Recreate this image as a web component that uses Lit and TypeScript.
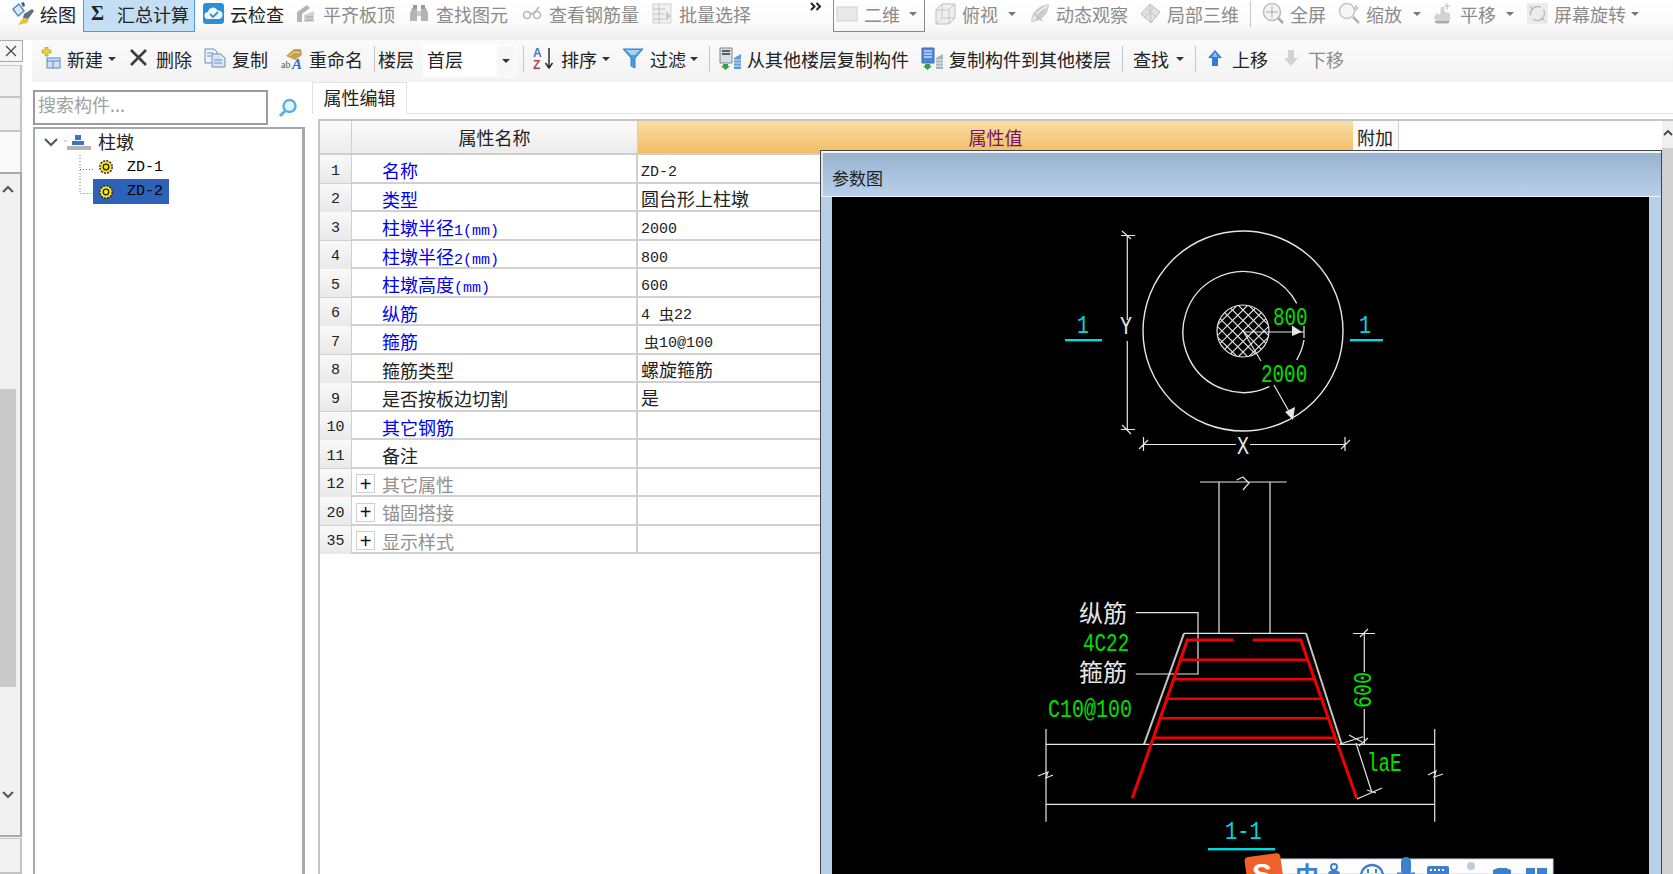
import { LitElement, css, html, svg } from 'lit';
import { customElement } from 'lit/decorators.js';

const G = '#b4b4b4';

const icons: Record<string, unknown> = {
  draw: svg`<path d="M0 7l7-6 6 8-7 6z" fill="#4f86c6"/><path d="M2 7l5-4 4 6-5 4z" fill="#dbe9f7"/><path d="M9 1l3-1 1 4-2 1z" fill="#2f5f9c"/><path d="M12 12l8-5 2 2-6 8-5-1z" fill="#5f6f80"/><path d="M11 16l-5 7 9-2 2-4z" fill="#e4c23c"/>`,
  cloud: svg`<rect x="1" y="1" width="21" height="21" rx="3" fill="#2e8fd8"/><path d="M6 17a3.5 3.5 0 0 1 0-7 5 5 0 0 1 9.500-1.500A4.300 4.300 0 0 1 17 17z" fill="#f2f8fd"/><path d="M8 12l3 3 5-5" stroke="#2e8fd8" stroke-width="1.800" fill="none"/>`,
  align: svg`<path d="M2 20V10l10-7 3 3-8 6v8z" fill="${G}"/><path d="M9 20v-7l10-4v11z" fill="#d4d4d4"/><path d="M11 18h7M11 15h7" stroke="#9a9a9a"/>`,
  binoc: svg`<path d="M4 6h5v13H2V11zM13 6h5l2 5v8h-7z" fill="${G}"/><rect x="5" y="3" width="4" height="4" fill="#999"/><rect x="13" y="3" width="4" height="4" fill="#999"/><rect x="9" y="9" width="4" height="5" fill="#ccc"/>`,
  glasses: svg`<circle cx="6" cy="13" r="3.500" fill="none" stroke="${G}" stroke-width="1.500"/><circle cx="16" cy="13" r="3.500" fill="none" stroke="${G}" stroke-width="1.500"/><path d="M9 12l4-1M13 11l5-6" stroke="${G}" stroke-width="1.500"/>`,
  batch: svg`<path d="M2 2h18v19H2z" fill="#f1f1f1" stroke="#d0d0d0"/><path d="M2 7h12M2 12h12M2 17h12M8 2v19" stroke="#c0c0c0"/><path d="M15 9l5 5-5 5z" fill="#c8c8c8"/>`,
  flat: svg`<rect x="1" y="5" width="20" height="14" fill="#e9e9e9" stroke="#cfcfcf"/>`,
  cube: svg`<path d="M2 8l6-6h13v14l-6 6H2z" fill="#efefef" stroke="#bdbdbd"/><path d="M2 8h13v14M15 8l6-6M2 22l6-6h13M8 2v14" stroke="#c6c6c6" fill="none"/>`,
  orbit: svg`<path d="M3 20C3 11 10 3 21 2c0 9-7 18-18 18z" fill="#cfcfcf"/><path d="M5 18C9 12 13 8 19 4" stroke="#f2f2f2" stroke-width="2"/><path d="M7 12l7 7" stroke="#aaa"/>`,
  part: svg`<path d="M11 2l10 8-9 11L2 12z" fill="#e2e2e2" stroke="#bcbcbc"/><path d="M7 6l10 9M15 5L6 16M11 2l1 19" stroke="#c4c4c4"/>`,
  full: svg`<circle cx="10" cy="10" r="8.500" fill="#f4f4f4" stroke="#bbb" stroke-width="1.500"/><path d="M10 4v12M4 10h12" stroke="#aaa"/><path d="M16 16l5 5" stroke="#aaa" stroke-width="2.500"/>`,
  zoom: svg`<circle cx="9" cy="9" r="7.500" fill="#f6f6f6" stroke="#c4c4c4" stroke-width="1.500"/><path d="M15 15l6 6" stroke="#b4b4b4" stroke-width="2.500"/><path d="M18 3v6M15 6h6" stroke="#c4c4c4" stroke-width="1.500"/>`,
  pan: svg`<path d="M2 15l3-4 3 2 1-8h3l1 5 5 1v8l-3 3H5z" fill="#d2d2d2"/><path d="M15 1v7M12 4h6" stroke="#bdbdbd"/><path d="M3 20h14" stroke="#aaa" stroke-width="2"/>`,
  rot: svg`<rect x="1" y="1" width="21" height="21" fill="#ececec"/><circle cx="11.500" cy="11.500" r="7" fill="none" stroke="#bdbdbd" stroke-width="1.500" stroke-dasharray="16 4"/><path d="M4 4l3 4M19 19l-4-3" stroke="#aaa"/>`,
  add: svg`<path d="M3 3h3V0h3v3h3v3H9v3H6V6H3z" fill="#f0d23c" stroke="#a88f1c" stroke-width=".6"/><rect x="8" y="11" width="13" height="10" fill="#cfe0f3" stroke="#5d88bb"/><path d="M8 14h13M14 14v7" stroke="#5d88bb"/>`,
  del: svg`<path d="M3 3l15 15M18 3L3 18" stroke="#3c3c3c" stroke-width="2.600"/>`,
  copy: svg`<path d="M1 2h9l3 3v11H1z" fill="#eef4fb" stroke="#6c8fb8"/><path d="M8 7h9l4 4v9H8z" fill="#d8e6f5" stroke="#6c8fb8"/><path d="M3 6h6M3 9h4M10 13h8M10 16h8" stroke="#6c8fb8"/>`,
  rename: svg`<path d="M5 9l8-7h7l1 6-7 5z" fill="#c89f4e"/><path d="M8 9l6-4 5 1" stroke="#f0dcae" fill="none"/><text x="0" y="21" font-family="Liberation Serif" font-size="10" fill="#555">ab</text><text x="11" y="22" font-family="Liberation Serif" font-size="15" font-style="italic" font-weight="700" fill="#3b6db5">A</text>`,
  az: svg`<text x="0" y="10" font-family="Liberation Sans" font-size="12" font-weight="700" fill="#4b78c4">A</text><text x="0" y="22" font-family="Liberation Sans" font-size="12" font-weight="700" fill="#b5404a">Z</text><path d="M16 1v19M12.500 16l3.500 5 3.500-5" stroke="#222" stroke-width="1.400" fill="none"/>`,
  funnel: svg`<path d="M1 2h20l-8 9v10l-4-2v-8z" fill="#4d9be0" stroke="#3c7fc2"/><path d="M4 3h14l-5 5H9z" fill="#a9d3f4"/>`,
  from: svg`<path d="M1 1h12v15H1z" fill="#d9dee4" stroke="#7c8791"/><path d="M3 4h8M3 7h8" stroke="#333" stroke-width="1.500"/><path d="M4 17h5v2h2l-4.500 4L2 19h2z" fill="#35a04a"/><path d="M15 11l7-4v15h-7z" fill="#5f9bd5"/><path d="M15 13h7M15 16h7M15 19h7" stroke="#d6e6f6"/>`,
  to: svg`<path d="M1 1h12v15H1z" fill="#4f87d6" stroke="#3c6bb0"/><path d="M3 4h8M3 7h8M3 10h8" stroke="#fff"/><path d="M4 17h5v2h2l-4.500 4L2 19h2z" fill="#35a04a"/><path d="M15 11l7-4v15h-7z" fill="#a8b2bd"/><path d="M15 13h7M15 16h7M15 19h7" stroke="#eef1f4"/>`,
  up: svg`<path d="M11 3l7 8h-4v8H8v-8H4z" fill="#2f7bdc"/><path d="M11 5l3 5h-6z" fill="#8fc2f6"/>`,
  down: svg`<path d="M8 3h6v8h4l-7 8-7-8h4z" fill="#d2d2d2"/>`,
};

const gear = html`<svg class="gear" viewBox="0 0 16 16" width="16" height="16">
  <circle cx="8" cy="8" r="6.200" fill="#f8e81c" stroke="#222" stroke-width="1.400" stroke-dasharray="2 1.200"/>
  <circle cx="8" cy="8" r="2.800" fill="#f8e81c" stroke="#222" stroke-width="1.300"/>
</svg>`;

interface Tool {
  icon?: string;
  label: string;
  ml: number;
  gray?: boolean;
  caret?: number;
}

const topA: Tool[] = [
  { icon: 'draw', label: '绘图', ml: 12 },
];
const topB: Tool[] = [
  { icon: 'cloud', label: '云检查', ml: 7 },
  { icon: 'align', label: '平齐板顶', ml: 11, gray: true },
  { icon: 'binoc', label: '查找图元', ml: 13, gray: true },
  { icon: 'glasses', label: '查看钢筋量', ml: 13, gray: true },
  { icon: 'batch', label: '批量选择', ml: 12, gray: true },
];
const topC: Tool[] = [
  { icon: 'cube', label: '俯视', ml: 9, gray: true, caret: 10 },
  { icon: 'orbit', label: '动态观察', ml: 12, gray: true },
  { icon: 'part', label: '局部三维', ml: 11, gray: true },
];
const topD: Tool[] = [
  { icon: 'full', label: '全屏', ml: 11, gray: true },
  { icon: 'zoom', label: '缩放', ml: 12, gray: true, caret: 11 },
  { icon: 'pan', label: '平移', ml: 11, gray: true, caret: 10 },
  { icon: 'rot', label: '屏幕旋转', ml: 12, gray: true, caret: 5 },
];

const secA: Tool[] = [
  { icon: 'add', label: '新建', ml: 7, caret: 5 },
  { icon: 'del', label: '删除', ml: 12 },
  { icon: 'copy', label: '复制', ml: 12 },
  { icon: 'rename', label: '重命名', ml: 13 },
];
const secB: Tool[] = [
  { icon: 'az', label: '排序', ml: 9, caret: 5 },
  { icon: 'funnel', label: '过滤', ml: 12, caret: 4 },
];
const secC: Tool[] = [
  { icon: 'from', label: '从其他楼层复制构件', ml: 9 },
  { icon: 'to', label: '复制构件到其他楼层', ml: 12 },
];
const secD: Tool[] = [
  { icon: 'up', label: '上移', ml: 8 },
  { icon: 'down', label: '下移', ml: 12, gray: true },
];

interface Row {
  n: number;
  name: string;
  unit?: string;
  kind: 'blue' | 'plain' | 'group';
  val?: unknown;
}

const rows: Row[] = [
  { n: 1, name: '名称', kind: 'blue', val: html`<span class="mono">ZD-2</span>` },
  { n: 2, name: '类型', kind: 'blue', val: '圆台形上柱墩' },
  { n: 3, name: '柱墩半径', unit: '1(mm)', kind: 'blue', val: html`<span class="mono">2000</span>` },
  { n: 4, name: '柱墩半径', unit: '2(mm)', kind: 'blue', val: html`<span class="mono">800</span>` },
  { n: 5, name: '柱墩高度', unit: '(mm)', kind: 'blue', val: html`<span class="mono">600</span>` },
  { n: 6, name: '纵筋', kind: 'blue', val: html`<span class="mono">4 </span><span class="bar">虫</span><span class="mono">22</span>` },
  { n: 7, name: '箍筋', kind: 'blue', val: html`<span class="bar lead">虫</span><span class="mono">10@100</span>` },
  { n: 8, name: '箍筋类型', kind: 'plain', val: '螺旋箍筋' },
  { n: 9, name: '是否按板边切割', kind: 'plain', val: '是' },
  { n: 10, name: '其它钢筋', kind: 'blue' },
  { n: 11, name: '备注', kind: 'plain' },
  { n: 12, name: '其它属性', kind: 'group' },
  { n: 20, name: '锚固搭接', kind: 'group' },
  { n: 35, name: '显示样式', kind: 'group' },
];

// section drawing, all coordinates are page pixels (viewBox starts at the canvas corner)
const WHITE = '#e6e6e6';
const GREEN = '#00e000';
const CYAN = '#00d8e0';

const cad = (x: number, y: number, t: string, fill: string, sx = 0.77) =>
  svg`<text class="cad" transform="translate(${x} ${y}) scale(${sx} 1)" fill=${fill}>${t}</text>`;

const hatch = () => {
  const out: unknown[] = [];
  for (let d = -42; d <= 42; d += 10.500) {
    out.push(svg`<line x1=${1243 + d - 30} y1="301" x2=${1243 + d + 30} y2="361"/>`);
    out.push(svg`<line x1=${1243 + d + 30} y1="301" x2=${1243 + d - 30} y2="361"/>`);
  }
  return out;
};

const stirrups = [659.7, 679.3, 698.7, 718.3, 737.7].map((y) => {
  const l = 1187.3 - ((y - 640) * 55) / 158.3;
  const r = 1300.7 + ((y - 640) * 56) / 158.3;
  return svg`<line x1=${l} y1=${y} x2=${r} y2=${y}/>`;
});

const drawing = html`<svg class="draw" viewBox="832 197 817 677" width="817" height="677">
  <defs><clipPath id="core"><circle cx="1243" cy="331" r="26"/></clipPath></defs>
  <g fill="none" stroke=${WHITE} stroke-width="1.200">
    <circle cx="1243" cy="331" r="100" stroke-width="1.400"/>
    <path d="M1296.700 303.300A60.500 60.500 0 1 0 1269.300 386.700M1304 340A60.500 60.500 0 0 1 1296.700 360" stroke-width="1.400"/>
    <circle cx="1243" cy="331" r="26"/>
    <g clip-path="url(#core)" stroke-width="1.200">${hatch()}</g>
    <path d="M1243 332H1304M1304 326V338M1243 331L1261 361M1274 385L1292.700 418"/>
    <path d="M1127.300 235V320M1127.300 341V430M1121 235.500H1135M1121 429.500H1135M1122 231L1131 239M1122 425L1131 434"/>
    <path d="M1143.500 444.500H1236M1250 444.500H1345M1143.500 437V451M1345 437V451M1139 449L1148 440M1341 449L1350 440"/>
    <path d="M1200 482H1286.700M1219 482V633.300M1270 482V633.300M1236.700 480L1243 477L1249 483L1243 490"/>
    <path d="M1184 633.300H1306"/>
    <path d="M1184 633.300L1144 744.300M1306 633.300L1341.700 744.300" stroke="#c4c4c4" stroke-width="2"/>
    <path d="M1046 744.300H1434.700M1046 804.300H1434.700M1046 729V821.700M1434.700 729V821.700"/>
    <path d="M1038 776L1048 772L1046 778L1053 775M1428 775L1436 771L1434 777L1443 774"/>
    <path d="M1135.700 612.700H1198V674H1135.700"/>
    <path d="M1364.300 633.300V672M1364.300 709V745M1353 633.500H1375M1360 637L1368 629M1340 744L1363 736.700M1349 735L1362 742M1359 746L1368 738"/>
    <path d="M1356 743L1371.700 791.700M1357 799L1382 788M1367 790L1376 793"/>
  </g>
  <path d="M1292 325.500L1302 332L1292 336z" fill=${WHITE}/>
  <path d="M1285 412L1295 407L1293 420z" fill=${WHITE}/>
  <path d="M1233.300 640H1187.300L1132.300 798.300M1252.700 640H1300.700L1356.700 798.300" fill="none" stroke="#f00000" stroke-width="3"/>
  <g stroke="#f00000" stroke-width="2.400">${stirrups}</g>
  <g fill=${CYAN}>
    <rect x="1065" y="339" width="37" height="2.400"/>
    <rect x="1350" y="339" width="33" height="2.400"/>
    <rect x="1208" y="848" width="67" height="2.400"/>
  </g>
  <g>
    ${cad(1077, 333, '1', CYAN, 0.8)}
    ${cad(1359, 333, '1', CYAN, 0.8)}
    ${cad(1225, 839, '1-1', CYAN, 0.82)}
    ${cad(1120, 334, 'Y', WHITE, 0.8)}
    ${cad(1237, 454, 'X', WHITE, 0.8)}
    ${cad(1273, 325, '800', GREEN)}
    ${cad(1261, 382, '2000', GREEN)}
    ${cad(1083, 651, '4C22', GREEN)}
    ${cad(1048, 717, 'C10@100', GREEN, 0.8)}
    ${cad(1367, 771, 'laE', GREEN)}
    <text class="cad" transform="translate(1371 708) rotate(-90) scale(.8 1)" fill=${GREEN}>600</text>
    <text class="zh" x="1079" y="622" fill=${WHITE}>纵筋</text>
    <text class="zh" x="1079" y="681" fill=${WHITE}>箍筋</text>
  </g>
</svg>`;

@customElement('app-root')
export class AppRoot extends LitElement {
  private tool(t: Tool) {
    return html`<div class="tool ${t.gray ? 'gray' : ''}" style="margin-left:${t.ml}px">
      ${t.icon ? html`<svg class="ico" viewBox="0 0 22 24" width="22" height="24">${icons[t.icon]}</svg>` : ''}
      <span class="lbl">${t.label}</span>
      ${t.caret ? html`<i class="caret" style="margin-left:${t.caret - 6}px"></i>` : ''}
    </div>`;
  }

  private row(r: Row) {
    return html`<div class="row">
      <div class="num">${r.n}</div>
      <div class="name ${r.kind}">
        ${r.kind === 'group' ? html`<span class="plus">+</span>` : ''}
        <span>${r.name}${r.unit ? html`<span class="unit">${r.unit}</span>` : ''}</span>
      </div>
      <div class="val"><span>${r.val ?? ''}</span></div>
    </div>`;
  }

  render() {
    return html`
      <div class="top">
        ${topA.map((t) => this.tool(t))}
        <div class="sum"><span class="sigma">Σ</span><span class="lbl">汇总计算</span></div>
        ${topB.map((t) => this.tool(t))}
        <svg class="more" viewBox="0 0 12 9" width="12" height="9"><path d="M1 1l3.500 3.500L1 8M6.500 1L10 4.500 6.500 8" fill="none" stroke="#222" stroke-width="2"/></svg>
        <div class="view">
          <svg class="ico" viewBox="0 0 22 24" width="22" height="24">${icons.flat}</svg>
          <span class="lbl">二维</span><i class="caret dim"></i>
        </div>
        ${topC.map((t) => this.tool(t))}
        <i class="sep s11"></i>
        ${topD.map((t) => this.tool(t))}
      </div>

      <div class="main">
        <div class="strip">
          <div class="close"><svg viewBox="0 0 12 12" width="12" height="12"><path d="M1 1l10 10M11 1L1 11" stroke="#444" stroke-width="1.200"/></svg></div>
          <div class="cell first"></div>
          <div class="cell"></div>
          <div class="cell tall"></div>
          <div class="track">
            <div class="chev">
              <svg viewBox="0 0 12 8" width="12" height="8"><path d="M1 7l5-5 5 5" fill="none" stroke="#555" stroke-width="2"/></svg>
            </div>
            <div class="thumb"></div>
            <div class="chev low">
              <svg viewBox="0 0 12 8" width="12" height="8"><path d="M1 1l5 5 5-5" fill="none" stroke="#555" stroke-width="2"/></svg>
            </div>
          </div>
          <div class="cell last"></div>
        </div>

        <div class="work">
          <div class="sec">
            ${secA.map((t) => this.tool(t))}
            <i class="sep s11"></i>
            <span class="lbl floor">楼层</span>
            <div class="combo"><span class="lbl">首层</span><span class="combo-btn"><i class="caret"></i></span></div>
            <i class="sep s7"></i>
            ${secB.map((t) => this.tool(t))}
            <i class="sep s11"></i>
            ${secC.map((t) => this.tool(t))}
            <i class="sep s11"></i>
            ${this.tool({ label: '查找', ml: 10, caret: 7 })}
            <i class="sep s11"></i>
            ${secD.map((t) => this.tool(t))}
          </div>

          <div class="panes">
            <div class="tree-pane">
              <div class="search">
                <div class="input">搜索构件...</div>
                <svg viewBox="0 0 20 20" width="20" height="20">
                  <circle cx="11.500" cy="8" r="6" fill="#e4f2fc" stroke="#58aee6" stroke-width="2.400"/>
                  <path d="M7 13l-5 5" stroke="#58aee6" stroke-width="3"/>
                </svg>
              </div>
              <div class="tree">
                <div class="root">
                  <svg viewBox="0 0 14 9" width="14" height="9"><path d="M1 1l6 6 6-6" fill="none" stroke="#555" stroke-width="2"/></svg>
                  <svg class="pier" viewBox="0 0 28 20" width="28" height="20">
                    <path d="M0 8h4" stroke="#888" stroke-dasharray="1 1"/>
                    <path d="M11 2h6v5h-6zM8 8h12v4H8z" fill="#3f74c4"/>
                    <path d="M3 13h24v4H3z" fill="#b4b4b4"/>
                  </svg>
                  <span class="lbl">柱墩</span>
                </div>
                <div class="kids">
                  <svg class="conn" viewBox="0 0 14 50" width="14" height="50">
                    <path d="M1 0V38.500H14M1 14.500H14" fill="none" stroke="#777" stroke-dasharray="1 2"/>
                  </svg>
                  <div>
                    <div class="leaf">${gear}<span class="mono">ZD-1</span></div>
                    <div class="leaf on">${gear}<span class="mono">ZD-2</span></div>
                  </div>
                </div>
              </div>
            </div>

            <div class="prop">
              <div class="tabs"><div class="tab"><span class="lbl">属性编辑</span></div></div>
              <div class="grid-wrap">
                <div class="grid">
                  <div class="head">
                    <div class="hc"></div>
                    <div class="hc">属性名称</div>
                    <div class="hc hot">属性值</div>
                    <div class="hc extra">附加</div>
                  </div>
                  ${rows.map((r) => this.row(r))}
                </div>
                <div class="vbar"><div class="cap"><svg viewBox="0 0 10 7" width="10" height="7"><path d="M1 6l4-4 4 4" fill="none" stroke="#444" stroke-width="1.800"/></svg></div></div>
              </div>
            </div>
          </div>
        </div>
      </div>

      <div class="dialog">
        <div class="title">参数图</div>
        <div class="canvas">${drawing}</div>
      </div>

      <svg class="ime" viewBox="0 0 320 24" width="320" height="24">
        <rect x="40" y="9" width="273" height="15" fill="#fdfdfd" stroke="#c8d4e4"/>
        <rect x="6" y="5" width="36" height="30" rx="4" fill="#f0602a" transform="rotate(-8 24 20)"/>
        <text x="12" y="34" font-family="Liberation Sans" font-size="30" font-weight="700" fill="#fff">S</text>
        <text x="55" y="34" class="zh-ime">中</text>
        <circle cx="94" cy="17" r="3" fill="none" stroke="#3f7fd0" stroke-width="2"/>
        <path d="M88 24a6 4 0 0 1 12 0" fill="#3f7fd0"/>
        <circle cx="132" cy="26" r="11" fill="none" stroke="#3f7fd0" stroke-width="2.400"/>
        <path d="M128 19v4M136 19v4" stroke="#3f7fd0" stroke-width="2"/>
        <rect x="161" y="7" width="10" height="18" rx="5" fill="#3f7fd0"/>
        <path d="M157 24h18" stroke="#3f7fd0" stroke-width="3"/>
        <rect x="187" y="16" width="22" height="10" rx="2" fill="#3f7fd0"/>
        <path d="M190 20h16" stroke="#fff" stroke-width="2" stroke-dasharray="2 2"/>
        <circle cx="231" cy="16" r="4" fill="#c0cbdc"/>
        <path d="M253 20l5-2h8l5 2v4h-18z" fill="#3f7fd0"/>
        <path d="M286 18h9v6h-9zM297 18h10v6h-10z" fill="#3f7fd0"/>
      </svg>
    `;
  }

  static styles = css`
    :host {
      display: block;
      position: relative;
      width: 1673px;
      height: 874px;
      overflow: hidden;
      background: #fff;
      color: #222;
      font-family: 'Noto Sans CJK SC', 'Liberation Sans', sans-serif;
      font-size: 18px;
    }
    .lbl { line-height: 1; white-space: nowrap; }
    .mono { font-family: 'Liberation Mono', monospace; font-size: 15px; }
    .gray { color: #8b8b8b; }

    .top {
      display: flex;
      align-items: center;
      height: 40px;
      padding-bottom: 12px;
      box-sizing: border-box;
      background: linear-gradient(#fff, #fbfbfb 60%, #ececec);
    }
    .tool { display: flex; align-items: center; gap: 6px; flex: none; }
    .ico { flex: none; }
    .caret {
      flex: none;
      width: 0;
      height: 0;
      border: 4px solid transparent;
      border-top: 4px solid #333;
      border-bottom: 0;
    }
    .caret.dim { border-top-color: #777; margin-left: 3px; }
    .gray .caret { border-top-color: #777; }
    .sep { flex: none; width: 1px; height: 26px; background: #c6c6c6; }
    .s11 { margin-left: 11px; }
    .s7 { margin-left: 7px; }
    .sum {
      flex: none;
      display: flex;
      align-items: center;
      align-self: flex-start;
      box-sizing: border-box;
      width: 112px;
      height: 32px;
      margin-left: 7px;
      padding: 0 0 4px 7px;
      background: #c3def5;
      border: 1px solid #4a9fe2;
      border-top: 0;
    }
    .sigma { width: 26px; font: 700 20px 'Liberation Serif', serif; }
    .more { flex: none; align-self: flex-start; margin: 2px 0 0 59px; }
    .view {
      flex: none;
      display: flex;
      align-items: center;
      align-self: flex-start;
      gap: 6px;
      box-sizing: border-box;
      width: 92px;
      height: 32px;
      margin-left: 11px;
      padding: 0 0 4px 2px;
      border: 1.500px solid #8a8a8a;
      border-top: 0;
      color: #8b8b8b;
    }

    .main { display: flex; height: 834px; }
    .strip { flex: none; display: flex; flex-direction: column; width: 23px; background: #f6f6f6; }
    .close {
      display: flex;
      align-items: center;
      justify-content: center;
      box-sizing: border-box;
      height: 22px;
      border: 1.500px solid #aaa;
      border-left: 0;
    }
    .cell { box-sizing: border-box; height: 34px; width: 22px; border: 1px solid #c4c4c4; border-width: 0 2px 2px 0; background: #f2f2f2; }
    .cell.first { margin-top: 3px; border-top: 1px solid #ccc; height: 33px; }
    .cell.tall { height: 40px; background: #fafafa; border-bottom: 0; }
    .cell.last { height: 36px; margin-top: 1px; border-top: 1px solid #c4c4c4; }
    .track {
      flex: none;
      display: flex;
      flex-direction: column;
      box-sizing: border-box;
      width: 22px;
      height: 665px;
      background: #f1f1f1;
      border: 2px solid #a6a9ad;
      border-width: 2px 2px 2px 0;
    }
    .chev { display: flex; justify-content: center; padding: 11px 4px 0 0; height: 21px; }
    .chev.low { padding-top: 104px; }
    .thumb { margin-top: 183px; height: 298px; width: 16px; background: #c9c9c9; }

    .work { flex: 1; display: flex; flex-direction: column; min-width: 0; padding-left: 9px; }
    .sec {
      flex: none;
      display: flex;
      align-items: center;
      box-sizing: border-box;
      height: 42px;
      padding-bottom: 4px;
      background: linear-gradient(#fafafa, #f3f3f3);
    }
    .floor { margin-left: 3px; }
    .combo {
      flex: none;
      display: flex;
      align-items: center;
      align-self: flex-start;
      justify-content: space-between;
      box-sizing: border-box;
      width: 93px;
      height: 32px;
      margin: 5px 0 0 9px;
      padding-left: 4px;
      background: #fff;
    }
    .combo .lbl { margin-bottom: 4px; }
    .combo-btn {
      display: flex;
      align-items: center;
      justify-content: center;
      width: 18px;
      height: 30px;
      margin-right: 1px;
      background: #f7f7f7;
    }

    .panes { flex: 1; display: flex; min-height: 0; }
    .tree-pane { flex: none; display: flex; flex-direction: column; width: 273px; }
    .search {
      flex: none;
      display: flex;
      align-items: center;
      gap: 10px;
      height: 45px;
      padding: 8px 0 2px 1px;
      box-sizing: border-box;
    }
    .input {
      box-sizing: border-box;
      width: 235px;
      height: 35px;
      padding-left: 3px;
      border: 2px solid #9c9c9c;
      color: #a2a2a2;
      line-height: 25px;
    }
    .tree {
      flex: 1;
      box-sizing: border-box;
      margin-left: 1px;
      padding-top: 1px;
      border: 2px solid #a6a9ad;
      border-bottom: 0;
      border-right-width: 3px;
    }
    .root { display: flex; align-items: center; height: 25px; padding-left: 9px; }
    .root .lbl { margin-bottom: 4px; }
    .pier { margin: 0 6px 0 6px; }
    .kids { display: flex; margin-left: 44px; }
    .conn { flex: none; }
    .leaf { display: flex; align-items: center; gap: 13px; width: 76px; height: 24px; padding-left: 5px; box-sizing: border-box; color: #000; }
    .leaf.on { background: #2d62b8; height: 25px; }
    .gear { flex: none; }

    .prop { flex: 1; min-width: 0; margin-left: 7px; display: flex; flex-direction: column; }
    .tabs { flex: none; height: 31px; border-bottom: 1.500px solid #e2e2e2; box-sizing: content-box; }
    .tab {
      display: flex;
      align-items: center;
      justify-content: center;
      box-sizing: border-box;
      width: 95px;
      height: 32px;
      padding-bottom: 4px;
      background: #fff;
      border: 1px solid #e2e2e2;
      border-bottom: 0;
    }
    .grid-wrap {
      flex: 1;
      display: flex;
      min-height: 0;
      margin: 5px 0 0 6px;
      border-top: 2px solid #c4c4c4;
      border-left: 2px solid #c4c4c4;
    }
    .grid { flex: 1; min-width: 0; }
    .head { display: grid; grid-template-columns: 32px 286px 715px 46px; height: 34px; }
    .hc {
      display: flex;
      align-items: center;
      justify-content: center;
      background: linear-gradient(#fbfbfb, #ececec);
      border-right: 1.500px solid #cfcfcf;
      border-bottom: 2px solid #cfcfcf;
    }
    .hc.hot { background: linear-gradient(#f9dda6, #f1bd62); color: #75106e; border-right: 0; }
    .hc.extra { background: #fafafa; justify-content: flex-start; padding-left: 4px; }
    .row { display: grid; grid-template-columns: 32px 286px 1fr; box-sizing: border-box; height: 28.500px; border-bottom: 2px solid #d0d0d0; }
    .num {
      display: flex;
      align-items: center;
      justify-content: center;
      padding-top: 4px;
      box-sizing: border-box;
      font: 15px 'Liberation Mono', monospace;
      background: linear-gradient(#f9f9f9, #e9e9e9);
      border-right: 1.500px solid #cfcfcf;
    }
    .name { display: flex; align-items: center; box-sizing: border-box; padding: 2px 0 0 30px; white-space: nowrap; border-right: 2px solid #d0d0d0; }
    .name.blue { color: #0000f0; }
    .name.group { color: #8f8f8f; padding-left: 4px; }
    .unit { font: 15px 'Liberation Mono', monospace; }
    .plus {
      display: flex;
      align-items: center;
      justify-content: center;
      box-sizing: border-box;
      width: 19px;
      height: 19px;
      margin-right: 7px;
      color: #111;
      border: 1.500px solid #cfcfcf;
      font: 20px/1 'Liberation Sans', sans-serif;
    }
    .val { display: flex; align-items: center; padding-left: 3px; white-space: nowrap; }
    .val .mono { position: relative; top: -1px; }
    .bar { font-size: 15px; }
    .bar.lead { margin-left: 3px; }
    .vbar { flex: none; width: 11px; background: #d0d0d0; }
    .cap { height: 27px; background: #f0f0f0; display: flex; justify-content: center; padding-top: 8px; box-sizing: border-box; }

    .dialog {
      position: absolute;
      left: 820px;
      top: 150px;
      display: flex;
      flex-direction: column;
      box-sizing: border-box;
      width: 842px;
      height: 724px;
      border: 1px solid #444;
      border-bottom: 0;
      background: #b8cfe8;
    }
    .title {
      flex: none;
      box-sizing: border-box;
      height: 46px;
      padding: 15px 0 0 9px;
      background: linear-gradient(#98b2cf, #b9d0ea);
      border-top: 2px solid #f4f8fc;
      border-left: 2px solid #d9e6f4;
      border-bottom: 1px solid #eef4fb;
      font-size: 17px;
      line-height: 20px;
    }
    .canvas { flex: 1; margin-left: 11px; width: 817px; background: #000; overflow: hidden; }
    .draw { display: block; }
    .cad { font-family: 'Liberation Mono', monospace; font-size: 25px; }
    .zh { font-size: 24px; font-family: 'Noto Sans CJK SC', sans-serif; }
    .ime { position: absolute; left: 1240px; top: 850px; }
    .zh-ime { font-size: 24px; font-family: 'Noto Sans CJK SC', sans-serif; fill: #3f7fd0; font-weight: 700; }
  `;
}
